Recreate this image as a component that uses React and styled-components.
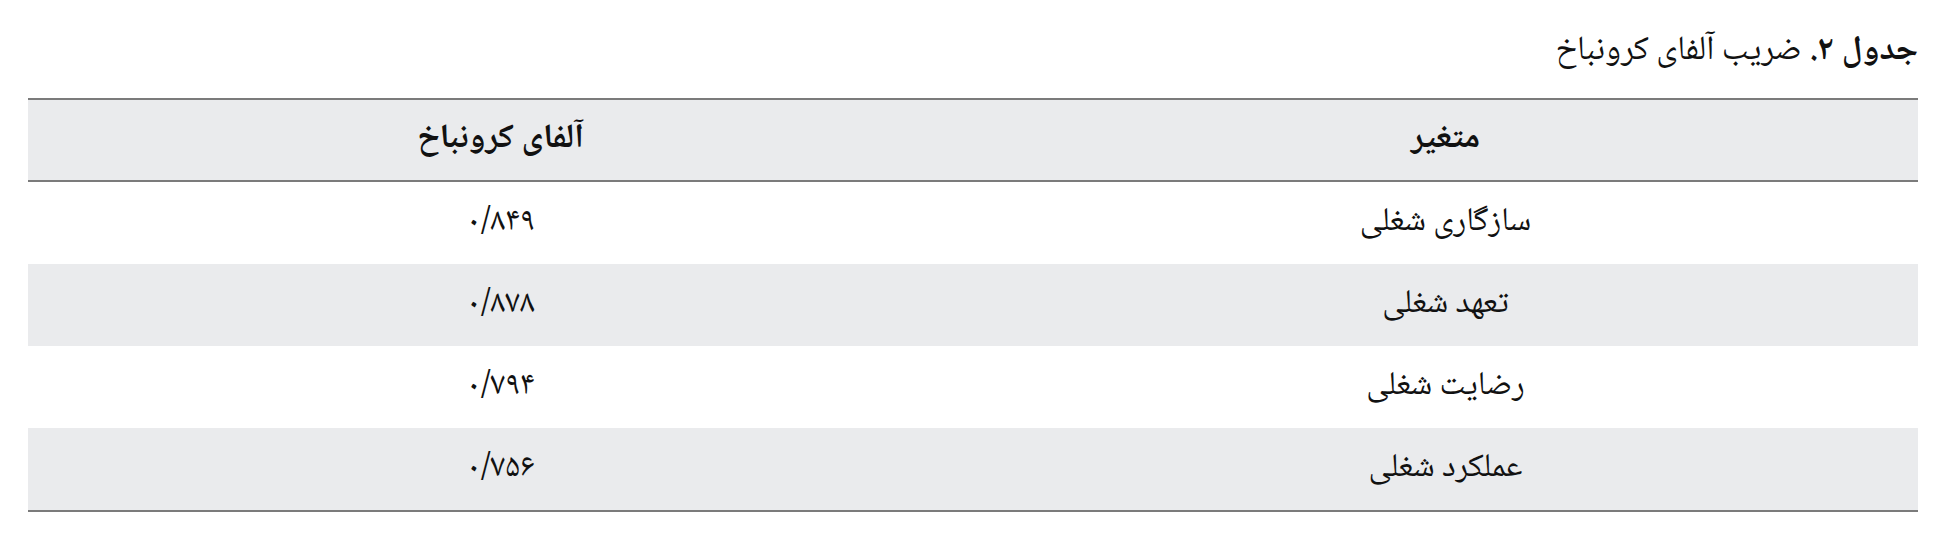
import React from 'react'
import styled, { createGlobalStyle } from 'styled-components'

const rows = [
  { name: 'سازگاری شغلی', alpha: '۰/۸۴۹' },
  { name: 'تعهد شغلی', alpha: '۰/۸۷۸' },
  { name: 'رضایت شغلی', alpha: '۰/۷۹۴' },
  { name: 'عملکرد شغلی', alpha: '۰/۷۵۶' },
]

const GlobalStyle = createGlobalStyle`
  body {
    margin: 0;
    background: #fff;
    font-family: "Noto Naskh Arabic", "DejaVu Sans", "Noto Sans", sans-serif;
    color: #111;
  }
`

const Page = styled.div`
  direction: rtl;
  padding: 30px 40px 0 40px;
`

const Caption = styled.div`
  font-size: 34px;
  line-height: 44px;
  margin-bottom: 24px;

  b {
    font-weight: 700;
  }
`

const Table = styled.table`
  width: 1890px;
  border-collapse: collapse;
  border-top: 2px solid #7b7b7b;
  border-bottom: 2px solid #7b7b7b;
`

const Row = styled.tr`
  background: ${(p) => (p.$shaded ? '#eaebed' : '#fff')};
`

const HeadCell = styled.th`
  width: 50%;
  height: 80px;
  padding: 0;
  font-size: 34px;
  font-weight: 700;
  text-align: center;
  border-bottom: 2px solid #7b7b7b;
`

const Cell = styled.td`
  width: 50%;
  height: 82px;
  padding: 0;
  font-size: 33px;
  text-align: center;
`

const App = () => {
  return (
    <Page>
      <GlobalStyle />
      <Caption>
        <b>جدول ۲.</b> ضریب آلفای کرونباخ
      </Caption>
      <Table>
        <thead>
          <Row $shaded>
            <HeadCell>متغیر</HeadCell>
            <HeadCell>آلفای کرونباخ</HeadCell>
          </Row>
        </thead>
        <tbody>
          {rows.map((r, i) => (
            <Row key={r.name} $shaded={i % 2 === 1}>
              <Cell>{r.name}</Cell>
              <Cell>{r.alpha}</Cell>
            </Row>
          ))}
        </tbody>
      </Table>
    </Page>
  )
}

export default App
